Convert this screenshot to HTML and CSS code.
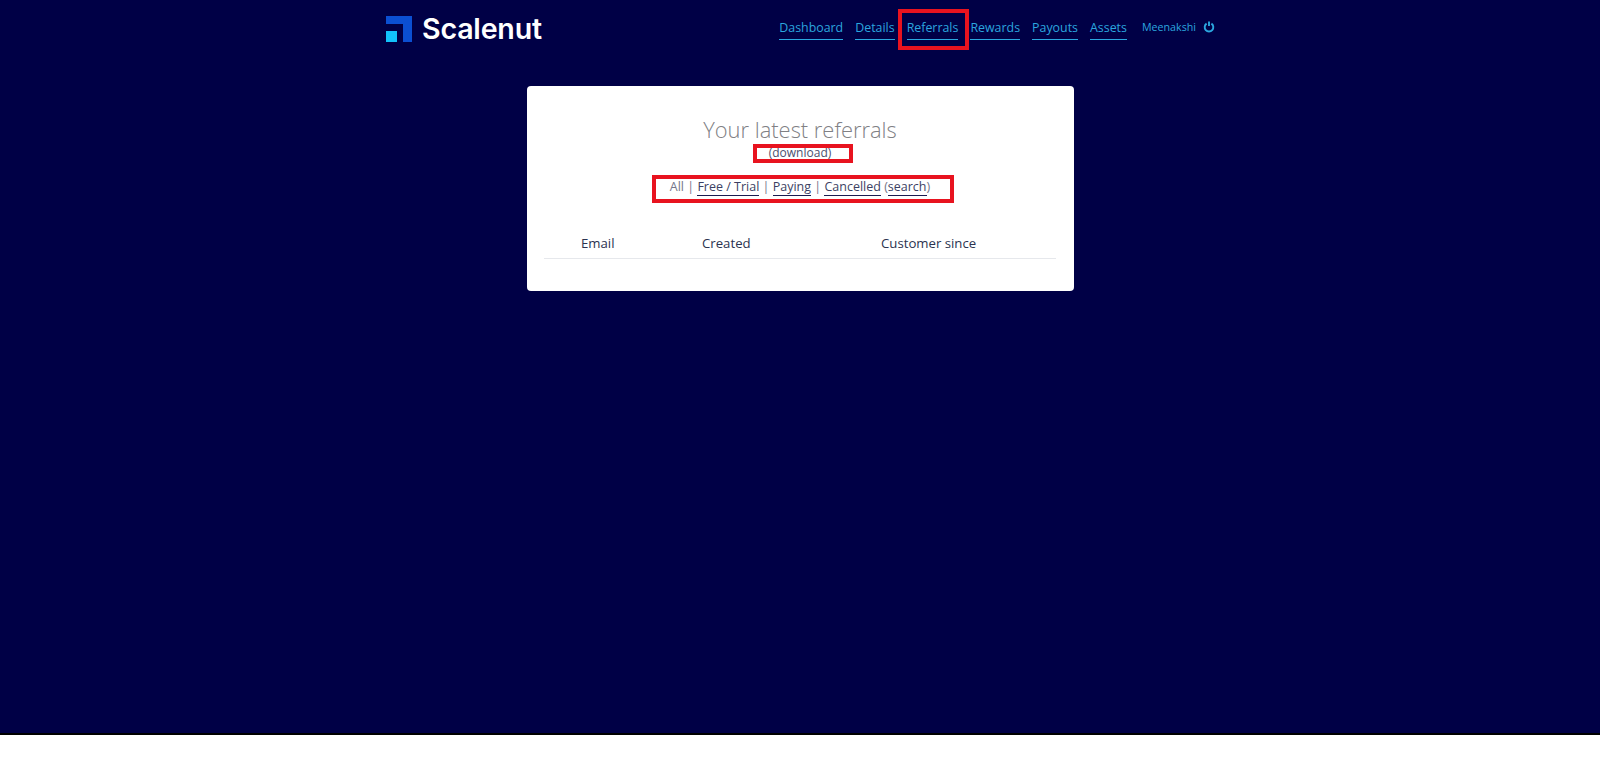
FILE: index.html
```html
<!DOCTYPE html>
<html>
  <head>
    <meta name="viewport" content="width=device-width, initial-scale=1" />
    <title>Scalenut - Referrals</title>
    <link rel="stylesheet" href="styles.css">
  </head>
  <body>
    <div class="page">
      <div class="topbar">
        <a class="brand" href="#home">
          <svg class="brand-icon" width="26" height="26" viewBox="0 0 26 26">
            <path d="M0 0H26V26H17V8H0Z" fill="#0b4fd2" />
            <rect x="0" y="15" width="11" height="11" fill="#12c2fb" />
          </svg>
          <span class="brand-name">Scalenut</span>
        </a>
        <div class="topnav">
          <a href="#dashboard">Dashboard</a>
          <a href="#details">Details</a>
          <a class="marked" href="#referrals">Referrals<span class="mark mark-nav"></span></a>
          <a href="#rewards">Rewards</a>
          <a href="#payouts">Payouts</a>
          <a href="#assets">Assets</a>
        </div>
        <div class="account">
          <span>Meenakshi</span>
          <svg width="12" height="12" viewBox="0 0 12 12">
            <path d="M3.6 2.6a4.3 4.3 0 1 0 4.8 0" fill="none" stroke="#2ba6df" stroke-width="1.9" />
            <path d="M6 .5V5" fill="none" stroke="#2ba6df" stroke-width="1.9" />
          </svg>
        </div>
      </div>

      <div class="card">
        <h1>Your latest referrals</h1>
        <div class="download marked">(<a class="plain" href="#download">download</a>)<span class="mark mark-download"></span></div>
        <div class="filters marked">
          All | <a href="#free">Free / Trial</a> | <a href="#paying">Paying</a> | <a href="#cancelled">Cancelled</a> (<a href="#search">search</a>)
          <span class="mark mark-filters"></span>
        </div>
        <table>
          <thead>
            <tr>
              <th class="col-email">Email</th>
              <th class="col-created">Created</th>
              <th class="col-since">Customer since</th>
            </tr>
          </thead>
        </table>
      </div>
    </div>
  </body>
</html>
```

FILE: styles.css
```css
body {
  margin: 0;
  background-color: white;
  font-family: "Open Sans", "Noto Sans", sans-serif;
}

a {
  color: inherit;
  text-decoration: none;
}

.page {
  height: 733px;
  overflow: hidden;
  background-color: #000046;
  border-bottom: 2px solid black;
}

.topbar {
  display: flex;
  align-items: flex-start;
  width: 829px;
  margin-left: 386px;
  height: 86px;
}

.brand {
  display: flex;
  align-items: center;
  gap: 10px;
  margin-top: 16px;
  color: white;
}

.brand-icon {
  display: block;
}

.brand-name {
  font-family: Inter, sans-serif;
  font-size: 28.6px;
  font-weight: 600;
  line-height: 26px;
  letter-spacing: -0.2px;
}

.topnav {
  display: flex;
  gap: 12px;
  margin-left: auto;
  margin-top: 18px;
  color: #2ba6df;
  font-size: 12.4px;
  line-height: 20px;
}

.topnav a {
  border-bottom: 1px solid #2ba6df;
  height: 21px;
}

.marked {
  position: relative;
}

.mark {
  position: absolute;
  border: 4px solid #e8131f;
  box-sizing: border-box;
}

.mark-nav {
  top: -9px;
  left: -9px;
  width: 71px;
  height: 41px;
}

.account {
  display: flex;
  align-items: center;
  gap: 7px;
  margin-left: 15px;
  margin-top: 18px;
  color: #2ba6df;
  font-size: 10.7px;
  line-height: 18px;
}

.card {
  width: 547px;
  height: 205px;
  box-sizing: border-box;
  margin-left: 527px;
  padding: 28px 18px 0 17px;
  background-color: white;
  border-radius: 4px;
  text-align: center;
}

h1 {
  margin: 0;
  color: #808084;
  font-size: 21.9px;
  font-weight: 300;
  line-height: 31px;
}

.download {
  width: 100px;
  margin: 0 auto;
  color: #4b4f6e;
  font-size: 12px;
  line-height: 16px;
}

.mark-download {
  top: -1px;
  left: 3px;
  width: 100px;
  height: 19px;
}

.filters {
  width: 302px;
  margin: 16px auto 0;
  color: #74768a;
  font-size: 12.5px;
  line-height: 20px;
}

.filters a {
  color: #3c3f63;
  border-bottom: 1px solid #1a1c50;
}

.mark-filters {
  top: -2px;
  left: 3px;
  width: 302px;
  height: 28px;
}

table {
  width: 100%;
  margin-top: 27px;
  border-collapse: collapse;
  table-layout: fixed;
}

th {
  padding: 9px 0 5px;
  color: #2b3350;
  font-size: 13.2px;
  font-weight: 400;
  line-height: 20px;
  text-align: left;
  border-bottom: 1px solid #e6e8ec;
}

.col-email {
  width: 158px;
  padding-left: 37px;
  box-sizing: border-box;
}

.col-created {
  width: 179px;
}
```
